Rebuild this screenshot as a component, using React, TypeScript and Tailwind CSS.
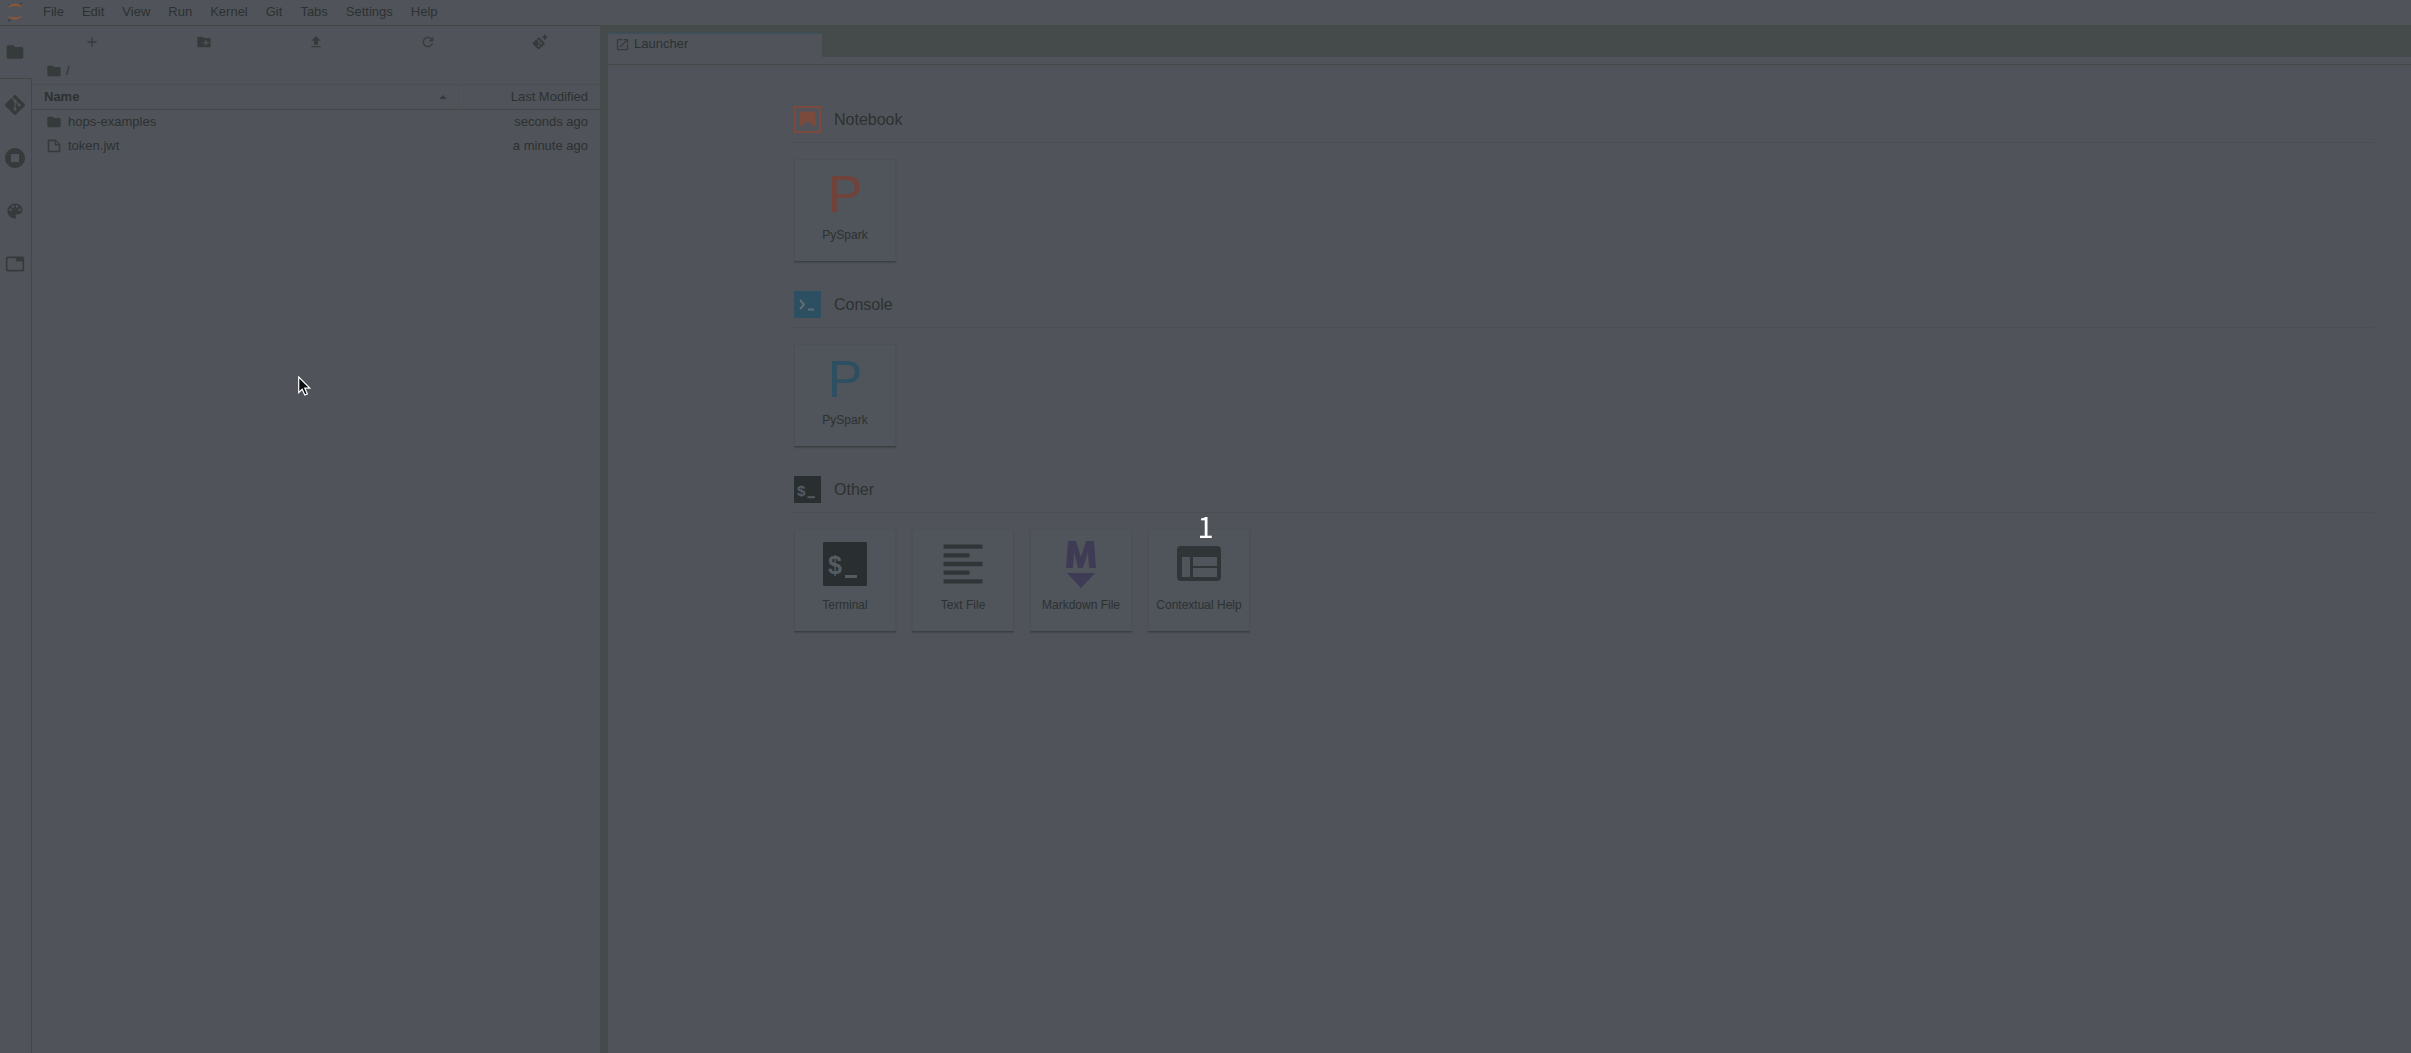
import React from "react";

function Folder({ size = 16, plus = false }: { size?: number; plus?: boolean }) {
  return (
    <svg width={size} height={size} viewBox="0 0 24 24" fill="#353b3b" className="shrink-0">
      {plus ? (
        <path d="M20 6h-8l-2-2H4c-1.11 0-1.99.89-1.99 2L2 18c0 1.11.89 2 2 2h16c1.11 0 2-.89 2-2V8c0-1.11-.89-2-2-2zm-1 8h-3v3h-2v-3h-3v-2h3V9h2v3h3v2z" />
      ) : (
        <path d="M10 4H4c-1.1 0-1.99.9-1.99 2L2 18c0 1.1.9 2 2 2h16c1.1 0 2-.9 2-2V8c0-1.1-.9-2-2-2h-8l-2-2z" />
      )}
    </svg>
  );
}

function Glyph({ d, size = 16 }: { d: string; size?: number }) {
  return (
    <svg width={size} height={size} viewBox="0 0 24 24" fill="#353b3b" className="shrink-0">
      <path d={d} />
    </svg>
  );
}

function JupyterLogo() {
  return (
    <svg width="16" height="20" viewBox="0 0 16 20">
      <path d="M1 5.6C3 0.6 13 0.6 15 5.6C11.5 3.4 4.5 3.4 1 5.6Z" fill="#8c5638" />
      <path d="M1 13.4C3 18.9 13 18.9 15 13.4C11.5 15.9 4.5 15.9 1 13.4Z" fill="#8c5638" />
      <circle cx="14" cy="1.5" r="1.1" fill="#3d4345" />
      <circle cx="1.5" cy="2.7" r="0.8" fill="#3d4345" />
      <circle cx="2.3" cy="18.3" r="1.4" fill="#3d4345" />
    </svg>
  );
}

const gitPath =
  "M23.546 10.930L13.067.452c-.604-.603-1.582-.603-2.188 0L8.708 2.627l2.760 2.760c.645-.215 1.379-.070 1.889.441.516.515.658 1.258.438 1.900l2.658 2.660c.645-.223 1.387-.078 1.900.435.721.720.721 1.884 0 2.604-.719.719-1.881.719-2.600 0-.539-.541-.674-1.337-.404-1.996L12.860 8.955v6.525c.176.086.342.203.488.348.713.721.713 1.883 0 2.600-.719.721-1.889.721-2.609 0-.719-.719-.719-1.879 0-2.598.182-.180.387-.316.605-.406V8.835c-.217-.091-.424-.222-.600-.401-.545-.545-.676-1.342-.396-2.009L7.636 3.700.450 10.881c-.600.605-.600 1.584 0 2.189l10.480 10.477c.604.604 1.582.604 2.186 0l10.430-10.430c.605-.603.605-1.582 0-2.187";

function GitClone() {
  return (
    <svg width="16" height="16" viewBox="0 0 24 24" fill="#353b3b">
      <g transform="translate(1 5) scale(0.76)">
        <path d={gitPath} />
      </g>
      <path d="M18 1h2.500v2.500h2.500v2.500h-2.500v2.500H18V6H15.500V3.500H18z" />
    </svg>
  );
}

const menus = ["File", "Edit", "View", "Run", "Kernel", "Git", "Tabs", "Settings", "Help"];

const sideTabs = [
  { label: "Git", d: gitPath, size: 20 },
  {
    label: "Running",
    d: "M12 2C6.480 2 2 6.480 2 12s4.480 10 10 10 10-4.480 10-10S17.520 2 12 2zm4 14H8V8h8v8z",
    size: 24,
  },
  {
    label: "Commands",
    d: "M12 3c-4.970 0-9 4.030-9 9s4.030 9 9 9c.830 0 1.500-.670 1.500-1.500 0-.390-.150-.740-.390-1.010-.230-.260-.380-.610-.380-.990 0-.830.670-1.500 1.500-1.500H16c2.760 0 5-2.240 5-5 0-4.420-4.030-8-9-8zm-5.500 9c-.830 0-1.500-.670-1.500-1.500S5.670 9 6.500 9 8 9.670 8 10.500 7.330 12 6.500 12zm3-4C8.670 8 8 7.330 8 6.500S8.670 5 9.500 5s1.500.670 1.500 1.500S10.330 8 9.500 8zm5 0c-.830 0-1.500-.670-1.500-1.500S13.670 5 14.500 5s1.500.670 1.500 1.500S15.330 8 14.500 8zm3 4c-.830 0-1.500-.670-1.500-1.500S16.670 9 17.500 9s1.500.670 1.500 1.500-.670 1.500-1.500 1.500z",
    size: 20,
  },
  {
    label: "Tabs",
    d: "M21 3H3c-1.100 0-2 .900-2 2v14c0 1.100.900 2 2 2h18c1.100 0 2-.900 2-2V5c0-1.100-.900-2-2-2zm0 16H3V5h10v4h8v10z",
    size: 20,
  },
];

const tools: { label: string; icon: React.ReactNode }[] = [
  { label: "New Launcher", icon: <Glyph d="M19 13h-6v6h-2v-6H5v-2h6V5h2v6h6v2z" /> },
  { label: "New Folder", icon: <Folder plus /> },
  { label: "Upload", icon: <Glyph d="M5 20h14v-2H5v2zM5 10h4v6h6v-6h4l-7-7-7 7z" /> },
  {
    label: "Refresh",
    icon: (
      <Glyph d="M17.650 6.350A7.958 7.958 0 0012 4c-4.420 0-7.990 3.580-7.990 8s3.570 8 7.990 8c3.730 0 6.840-2.550 7.730-6h-2.080A5.990 5.990 0 0112 18c-3.310 0-6-2.690-6-6s2.690-6 6-6c1.660 0 3.140.690 4.220 1.780L13 11h7V4l-2.350 2.350z" />
    ),
  },
  { label: "Git Clone", icon: <GitClone /> },
];

function Terminal({ size }: { size: number }) {
  return (
    <svg width={size} height={size} viewBox="0 0 44 44">
      <rect width="44" height="44" rx="1" fill="#292f30" />
      <text x="5" y="32" fontFamily="Liberation Sans" fontWeight="bold" fontSize="25" fill="#565b60">$</text>
      <rect x="22" y="33" width="12" height="3" fill="#565b60" />
    </svg>
  );
}

function NotebookIcon() {
  return (
    <svg width="27" height="27" viewBox="0 0 27 27">
      <rect x="1" y="1" width="25" height="25" fill="none" stroke="#7c4a3c" strokeWidth="2" />
      <path d="M5.500 5.500h16v16l-8-6.500-8 6.500z" fill="#7c4a3c" />
    </svg>
  );
}

function ConsoleIcon() {
  return (
    <svg width="27" height="27" viewBox="0 0 27 27">
      <rect width="27" height="27" fill="#2d4f62" />
      <path d="M6 9l4 4.500-4 4.500" fill="none" stroke="#626c74" strokeWidth="2" />
      <path d="M14 18.500h6" stroke="#626c74" strokeWidth="2" />
    </svg>
  );
}

function TextFileIcon() {
  return (
    <svg width="52" height="52" viewBox="0 0 24 24" fill="#303637">
      <path d="M15 15H3v2h12v-2zm0-8H3v2h12V7zM3 13h18v-2H3v2zm0 8h18v-2H3v2zM3 3v2h18V3H3z" />
    </svg>
  );
}

function MarkdownIcon() {
  return (
    <svg width="30" height="48" viewBox="0 0 30 48" fill="#3f3b55">
      <path d="M0 28L2 1h8l5 16 5-16h8l2 27h-7l-1-16-5 16h-5L8 12 7 28z" />
      <path d="M1 33h28L15 48z" />
    </svg>
  );
}

function HelpIcon() {
  return (
    <svg width="44" height="36" viewBox="0 0 44 36">
      <path
        fillRule="evenodd"
        fill="#303637"
        d="M4 0h36a4 4 0 014 4v27a4 4 0 01-4 4H4a4 4 0 01-4-4V4a4 4 0 014-4zM5 11v20h8V11zM16 11v9h24v-9zM16 22v9h24v-9z"
      />
    </svg>
  );
}

function Section({ icon, title, children }: { icon: React.ReactNode; title: string; children: React.ReactNode }) {
  return (
    <section className="mb-[29px]">
      <div className="flex h-[37px] items-start gap-[13px] border-b border-[#4b4f51] pl-[2px]">
        {icon}
        <h2 className="text-base leading-[27px]">{title}</h2>
      </div>
      <div className="flex gap-4 pt-4 pl-[2px]">{children}</div>
    </section>
  );
}

function Card({ label, children }: { label: string; children: React.ReactNode }) {
  return (
    <button className="flex h-[103px] w-[102px] flex-col items-center border border-[#4d5155] border-b-[#3a3f42] bg-[#50555c] pt-1 text-xs shadow-[0_1px_1px_#45494c]">
      <span className="flex h-[60px] items-center justify-center">{children}</span>
      <span className="mt-[2px] leading-[18px] whitespace-nowrap">{label}</span>
    </button>
  );
}

export default function App() {
  return (
    <div className="flex min-h-screen flex-col bg-[#50545a] font-['Liberation_Sans',Arial,sans-serif] text-[13px] text-[#2c3131]">
      <header className="flex h-[26px] items-center border-b border-[#434746] pb-[2px] pl-[7px]">
        <JupyterLogo />
        <nav className="flex gap-[18px] pl-5">
          {menus.map((m) => (
            <button key={m} className="leading-[22px]">{m}</button>
          ))}
        </nav>
      </header>

      <div className="flex grow">
        <aside className="flex w-8 shrink-0 flex-col">
          <button aria-label="File Browser" className="flex h-[52px] items-center justify-center pr-[2px]">
            <Folder size={20} />
          </button>
          <div className="flex grow flex-col border-t border-r border-[#434746]">
            {sideTabs.map((t) => (
              <button key={t.label} aria-label={t.label} className="flex h-[53px] items-center justify-center pr-px pb-[2px]">
                <Glyph d={t.d} size={t.size} />
              </button>
            ))}
          </div>
        </aside>

        <div className="flex w-[568px] shrink-0 flex-col">
          <div className="flex h-8 px-1">
            {tools.map((t) => (
              <button key={t.label} aria-label={t.label} className="flex flex-1 items-center justify-center">
                {t.icon}
              </button>
            ))}
          </div>
          <div className="flex h-[26px] items-center gap-1 pl-[14px]">
            <Folder />
            <span>/</span>
          </div>
          <table className="w-full table-fixed border-collapse">
            <thead>
              <tr className="h-[25px] border-t border-b border-t-[#4b4f51] border-b-[#434746]">
                <th className="pl-3 text-left font-bold">
                  <span className="flex items-center justify-between pr-[11px]">
                    Name
                    <svg width="8" height="5" viewBox="0 0 8 5" fill="#353b3b">
                      <path d="M4 0l4 4H0z" />
                    </svg>
                  </span>
                </th>
                <th className="w-[142px] border-l border-[#4c5155] pr-3 text-right font-normal">Last Modified</th>
              </tr>
            </thead>
            <tbody>
              <tr className="h-6">
                <td className="pl-[14px]">
                  <span className="flex items-center gap-[6px]">
                    <Folder />
                    hops-examples
                  </span>
                </td>
                <td className="pr-3 text-right">seconds ago</td>
              </tr>
              <tr className="h-6">
                <td className="pl-[14px]">
                  <span className="flex items-center gap-[6px]">
                    <svg width="16" height="16" viewBox="0 0 22 22" fill="#353b3b">
                      <path d="M19.300 8.200l-5.500-5.500c-.300-.300-.700-.500-1.200-.500H3.900c-.800.100-1.600.900-1.600 1.800v14.100c0 .900.700 1.600 1.600 1.600h14.200c.900 0 1.600-.700 1.600-1.600V9.400c.100-.500-.100-.900-.400-1.200zm-5.800-3.300l3.400 3.600h-3.400V4.900zm3.900 12.700H4.700c-.100 0-.200 0-.200-.200V4.700c0-.200.100-.300.200-.300h7.200v4.400s0 .800.300 1.100c.300.300 1.100.300 1.100.300h4.300v7.200s-.100.200-.200.200z" />
                    </svg>
                    token.jwt
                  </span>
                </td>
                <td className="pr-3 text-right">a minute ago</td>
              </tr>
            </tbody>
          </table>
        </div>

        <div className="w-2 shrink-0 bg-[#454a4b]" />

        <main className="flex min-w-0 grow flex-col">
          <div className="flex h-[31px] items-end bg-[#454a4b]">
            <button className="flex h-6 w-[214px] items-center gap-1 border-t border-[#38505f] bg-[#50545a] pb-[3px] pl-[7px]">
              <Glyph
                size={15}
                d="M19 19H5V5h7V3H5a2 2 0 00-2 2v14a2 2 0 002 2h14c1.100 0 2-.900 2-2v-7h-2v7zM14 3v2h3.590l-9.830 9.830 1.410 1.410L19 6.410V10h2V3h-7z"
              />
              Launcher
            </button>
          </div>
          <div className="h-2 border-b border-[#434746]" />
          <div className="pt-[41px] pr-9 pl-[184px]">
            <Section icon={<NotebookIcon />} title="Notebook">
              <Card label="PySpark">
                <span className="text-[52px] leading-[60px] text-[#70423a]">P</span>
              </Card>
            </Section>
            <Section icon={<ConsoleIcon />} title="Console">
              <Card label="PySpark">
                <span className="text-[52px] leading-[60px] text-[#2d4f62]">P</span>
              </Card>
            </Section>
            <Section icon={<Terminal size={27} />} title="Other">
              <Card label="Terminal"><Terminal size={44} /></Card>
              <Card label="Text File"><TextFileIcon /></Card>
              <Card label="Markdown File"><MarkdownIcon /></Card>
              <Card label="Contextual Help"><HelpIcon /></Card>
            </Section>
          </div>
        </main>
      </div>

      <div className="pointer-events-none fixed inset-0 flex items-center justify-center pb-1 font-['Noto_Sans_CJK_SC',sans-serif] text-[29px] leading-8 text-white">
        1
      </div>
      <svg className="pointer-events-none absolute top-[376px] left-[298px]" width="13" height="20" viewBox="0 0 13 20">
        <path d="M.700 1v15.500l3.500-3.300 2.600 5.800 2.600-1.100-2.600-5.700h5z" fill="#0b0d0e" stroke="#fff" strokeWidth="1.200" />
      </svg>
    </div>
  );
}
